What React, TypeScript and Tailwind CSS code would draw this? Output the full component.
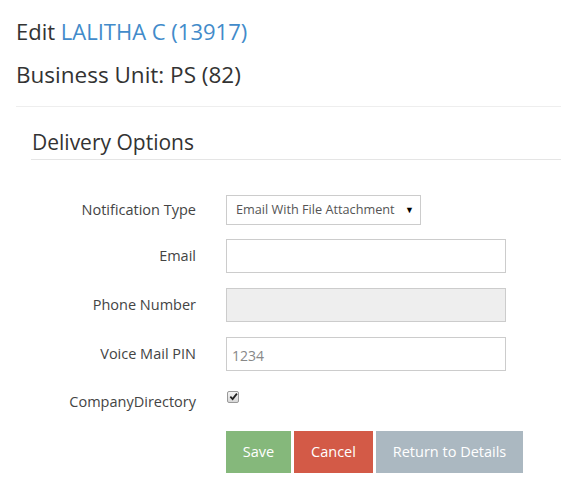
import { useState } from "react";

function Row({ label, children, className = "" }: { label: string; children: React.ReactNode; className?: string }) {
  return (
    <div className={`flex items-center ${className}`}>
      <label className="w-[196px] shrink-0 text-right text-[14.5px] text-[#444]">{label}</label>
      <div className="ml-[30px]">{children}</div>
    </div>
  );
}

export default function App() {
  const [checked, setChecked] = useState(true);

  return (
    <div className="min-h-[491px] bg-white font-['Open_Sans',sans-serif] text-[#333]">
      <div className="pl-4 pt-[16px]">
        <h3 className="text-[22px] leading-[30px]">
          Edit <span className="text-[#428bca]">LALITHA C (13917)</span>
        </h3>
        <h4 className="mt-[14px] text-[22.5px] leading-[30px]">Business Unit: PS (82)</h4>
        <hr className="mt-[16px] border-t border-[#eee]" />
      </div>

      <div className="pl-[31px] pt-[20px]">
        <h4 className="pl-px text-[21px] leading-[30px]">Delivery Options</h4>
        <hr className="mt-[2px] border-t border-[#e5e5e5]" />
      </div>

      <div className="pt-[35px]">
        <Row label="Notification Type">
          <div className="relative w-[195px]">
            <select className="box-border h-[30px] w-full appearance-none border border-[#ccc] bg-white pl-[9px] text-[12.7px] text-[#555] outline-none">
              <option>Email With File Attachment</option>
            </select>
            <span className="pointer-events-none absolute right-[7px] top-[8px] text-[9px] text-black">▼</span>
          </div>
        </Row>
        <Row label="Email" className="mt-[14px]">
          <input className="h-[34px] w-[280px] border border-[#ccc] bg-white px-[6px] text-[14px] text-[#555] outline-none" />
        </Row>
        <Row label="Phone Number" className="mt-[15px]">
          <input disabled className="h-[34px] w-[280px] border border-[#ccc] bg-[#eee] px-[6px] text-[14px] outline-none" />
        </Row>
        <Row label="Voice Mail PIN" className="mt-[15px]">
          <input
            defaultValue="1234"
            className="h-[34px] w-[280px] border border-[#ccc] bg-white px-[5px] pt-[2px] text-[14px] text-[#888] outline-none"
          />
        </Row>
        <Row label="CompanyDirectory" className="mt-[20px]">
          <button
            onClick={() => setChecked(!checked)}
            className="-mt-[10px] ml-px flex h-[12px] w-[12px] items-center justify-center rounded-[2px] border border-[#999] bg-gradient-to-b from-[#f4f4f4] to-[#d8d8d8]"
          >
            {checked && (
              <svg viewBox="0 0 10 10" className="h-[9px] w-[9px]">
                <path d="M1.5 5.2 L4 7.8 L8.8 1.8" fill="none" stroke="#222" strokeWidth="2" />
              </svg>
            )}
          </button>
        </Row>
        <div className="mt-[18px] flex pl-[226px]">
          <button className="h-[42px] w-[65px] bg-[#85b87b] text-[14.5px] text-white">Save</button>
          <button className="ml-[3px] h-[42px] w-[79px] bg-[#d35a47] text-[14.5px] text-white">Cancel</button>
          <button className="ml-[3px] h-[42px] w-[147px] bg-[#abb8c1] text-[14.5px] text-white">Return to Details</button>
        </div>
      </div>
    </div>
  );
}
